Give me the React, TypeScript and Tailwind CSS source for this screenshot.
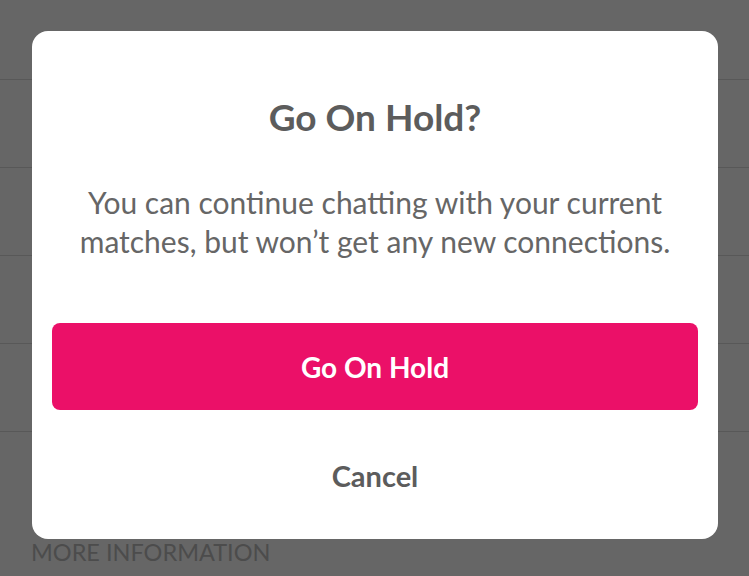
import React from "react";

export default function App() {
  const rows = [0, 1, 2, 3];
  return (
    <div className="relative w-[749px] h-[576px] overflow-hidden bg-[#666666]" style={{ fontFamily: "Lato, 'Open Sans', sans-serif" }}>
      <div className="h-[80px] border-b border-[#585858]" />
      {rows.map((r) => (
        <div key={r} className="h-[88px] border-b border-[#585858]" />
      ))}
      <div className="pl-[31px] pt-[105px] text-[23.5px] leading-[30px] text-[#4c4c4c]">MORE INFORMATION</div>

      <div className="absolute left-[32px] top-[31px] w-[686px] h-[508px] rounded-[16px] bg-white flex flex-col items-center pt-[64px]">
        <h1 className="text-[37px] leading-[44px] font-bold text-[#5c5c5c]">Go On Hold?</h1>
        <p className="mt-[44px] text-center text-[30px] leading-[39px] text-[#666666]">
          You can continue chatting with your current
          <br />
          matches, but won’t get any new connections.
        </p>
        <button className="mt-[62px] w-[646px] h-[87px] rounded-[8px] bg-[#eb1068] text-white text-[28px] font-bold">
          Go On Hold
        </button>
        <button className="mt-[46px] h-[40px] text-[29px] leading-[40px] font-bold text-[#5c5c5c]">Cancel</button>
      </div>
    </div>
  );
}
